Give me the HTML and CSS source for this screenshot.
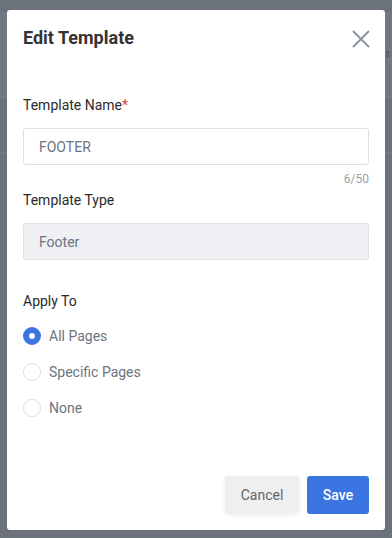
FILE: index.html
```html
<!DOCTYPE html>
<html>
<head>
  <title>Edit Template</title>
  <link rel="stylesheet" href="styles.css">
</head>
<body>
  <div class="page">
    <div class="page-top"></div>
    <div class="page-head">
      <span class="sort">&#x2B0D;</span>
    </div>
    <div class="page-row"></div>
    <div class="page-rest"></div>
  </div>

  <div class="modal">
    <div class="modal-header">
      <h2>Edit Template</h2>
      <button class="close-button" aria-label="Close">
        <svg width="18" height="18" viewBox="0 0 18 18">
          <path d="M1 1 L17 17 M17 1 L1 17" stroke="#89929c" stroke-width="1.8" fill="none"/>
        </svg>
      </button>
    </div>

    <div class="modal-body">
      <label class="field-label">Template Name<span class="required">*</span></label>
      <div class="text-input">FOOTER</div>
      <div class="counter">6/50</div>

      <label class="field-label">Template Type</label>
      <div class="text-input disabled">Footer</div>

      <label class="field-label apply-label">Apply To</label>
      <div class="radio-list">
        <div class="radio-row">
          <span class="radio checked"></span>
          <span>All Pages</span>
        </div>
        <div class="radio-row">
          <span class="radio"></span>
          <span>Specific Pages</span>
        </div>
        <div class="radio-row">
          <span class="radio"></span>
          <span>None</span>
        </div>
      </div>
    </div>

    <div class="modal-footer">
      <button class="cancel-button">Cancel</button>
      <button class="save-button">Save</button>
    </div>
  </div>
</body>
</html>
```

FILE: styles.css
```css
body {
  margin: 0;
  font-family: Roboto, "Liberation Sans", sans-serif;
  background-color: #6b727c;
  overflow: hidden;
}

/* faded page behind the overlay */
.page {
  height: 538px;
  display: flex;
  flex-direction: column;
}

.page-top {
  height: 12px;
}

.page-head {
  height: 85px;
  background-color: #717882;
  border-bottom: 1px solid #7a8189;
  display: flex;
  justify-content: flex-end;
  align-items: center;
}

.sort {
  color: #5f666f;
  font-size: 11px;
  margin-right: 0;
}

.page-row {
  height: 54px;
  border-bottom: 1px solid #737a83;
}

.page-rest {
  flex: 1;
}

.modal {
  position: absolute;
  top: 10px;
  left: 7px;
  width: 378px;
  height: 520px;
  background-color: #fff;
  border-radius: 3px;
  display: flex;
  flex-direction: column;
  box-sizing: border-box;
  padding: 0 16px 16px;
}

.modal-header {
  display: flex;
  justify-content: space-between;
  align-items: center;
  padding-top: 17px;
}

.modal-header h2 {
  margin: 0;
  font-size: 18px;
  line-height: 22px;
  font-weight: bold;
  color: #333;
}

.close-button {
  border: none;
  background: none;
  padding: 0;
  margin-right: -1px;
  margin-top: 1px;
  width: 18px;
  height: 18px;
  cursor: pointer;
}

.modal-body {
  flex: 1;
  display: flex;
  flex-direction: column;
  padding-top: 46px;
}

.field-label {
  font-size: 14px;
  line-height: 20px;
  color: #2a2a2a;
  margin-bottom: 13px;
}

.required {
  color: #e53935;
}

.text-input {
  height: 37px;
  box-sizing: border-box;
  border: 1px solid #dcdfe4;
  border-radius: 3px;
  padding: 0 15px;
  display: flex;
  align-items: center;
  font-size: 14px;
  color: #6b7480;
}

.text-input.disabled {
  background-color: #eef0f4;
  border-color: #dde0e5;
}

.counter {
  text-align: right;
  font-size: 12px;
  line-height: 16px;
  color: #9aa1a9;
  margin-top: 6px;
  margin-bottom: 3px;
}

.apply-label {
  margin-top: 31px;
  margin-bottom: 15px;
}

.radio-list {
  display: flex;
  flex-direction: column;
  gap: 16px;
}

.radio-row {
  display: flex;
  align-items: center;
  gap: 8px;
  height: 20px;
  font-size: 14px;
  color: #6b7480;
}

.radio {
  width: 18px;
  height: 18px;
  box-sizing: border-box;
  border: 1px solid #d9dce1;
  border-radius: 50%;
  background-color: #fff;
}

.radio.checked {
  border: 6px solid #3b74e0;
}

.modal-footer {
  display: flex;
  justify-content: flex-end;
  gap: 8px;
}

.modal-footer button {
  height: 38px;
  border: none;
  border-radius: 3px;
  font-family: Roboto, "Liberation Sans", sans-serif;
  font-size: 14px;
  cursor: pointer;
}

.cancel-button {
  width: 74px;
  background-color: #efefef;
  color: #666;
  box-shadow: 0 1px 4px rgba(0, 0, 0, 0.08);
}

.save-button {
  width: 62px;
  background-color: #3a75e1;
  color: #fff;
  font-weight: 500;
}
```
